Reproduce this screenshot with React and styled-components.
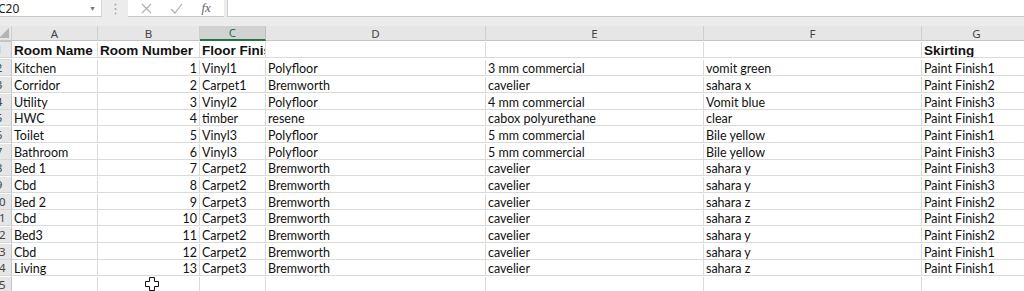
import React from 'react'
import styled, { createGlobalStyle } from 'styled-components'

const GlobalStyle = createGlobalStyle`
  html, body {
    margin: 0;
    padding: 0;
    background: #ffffff;
    overflow: hidden;
  }
`

const COLS = '25px 86px 102px 66px 220px 218px 218px 110px'

const Page = styled.div`
  width: 1024px;
  height: 291px;
  overflow: hidden;
  background: #ffffff;
`

const FormulaBar = styled.div`
  display: flex;
  align-items: stretch;
  height: 26px;
  background: #ececec;
  box-sizing: border-box;
  padding-bottom: 9px;
`

const NameBox = styled.div`
  width: 104px;
  margin-left: -2px;
  background: #ffffff;
  border-bottom: 1px solid #c9c9c9;
  border-right: 1px solid #d6d6d6;
  display: flex;
  align-items: center;
  justify-content: space-between;
  padding-right: 5px;
  box-sizing: border-box;
  font-family: 'Noto Sans', sans-serif;
  font-size: 12px;
  color: #222;
`

const Caret = styled.span`
  font-size: 7px;
  color: #777;
`

const Grip = styled.div`
  width: 26px;
  display: flex;
  justify-content: center;
  align-items: center;
  svg { display: block; }
`

const FnBox = styled.div`
  width: 96px;
  background: #ffffff;
  border-bottom: 1px solid #c9c9c9;
  display: flex;
  align-items: center;
  justify-content: space-around;
  padding: 0 4px 0 4px;
  box-sizing: border-box;
  color: #b5b5b5;
  svg { display: block; }
`

const Fx = styled.span`
  font-family: 'Liberation Serif', serif;
  font-style: italic;
  font-size: 13px;
  color: #666;
`

const FormulaInput = styled.div`
  flex: 1;
  margin-left: 3px;
  background: #ffffff;
  border-bottom: 1px solid #c9c9c9;
  border-left: 1px solid #d0d0d0;
`

const Sheet = styled.div`
  margin-left: -13px;
  display: flex;
  flex-direction: column;
`

const Row = styled.div`
  display: grid;
  grid-template-columns: ${COLS};
  height: ${p => p.$h}px;
`

const ColHead = styled.div`
  background: ${p => (p.$active ? '#d2d2d2' : '#e6e6e6')};
  color: ${p => (p.$active ? '#217346' : '#444')};
  border-right: 1px solid ${p => (p.$active ? '#bdbdbd' : '#cfcfcf')};
  border-bottom: ${p => (p.$active ? '2px solid #217346' : '1px solid #c4c4c4')};
  box-sizing: border-box;
  font-family: 'Noto Sans', sans-serif;
  font-size: 11.5px;
  display: flex;
  align-items: center;
  justify-content: center;
  position: relative;
  overflow: hidden;
`

const Corner = styled.div`
  position: absolute;
  right: 2px;
  bottom: 2px;
  width: 0;
  height: 0;
  border-left: 10px solid transparent;
  border-bottom: 10px solid #b4b4b4;
`

const RowHead = styled.div`
  background: #e6e6e6;
  border-right: 1px solid #c4c4c4;
  border-bottom: 1px solid #d6d6d6;
  box-sizing: border-box;
  font-family: 'Noto Sans', sans-serif;
  font-size: 11.5px;
  color: #444;
  display: flex;
  align-items: center;
  justify-content: center;
`

const Cell = styled.div`
  border-right: 1px solid #dadada;
  border-bottom: 1px solid #dadada;
  box-sizing: border-box;
  padding: 0 2px;
  white-space: nowrap;
  overflow: hidden;
  display: flex;
  align-items: center;
  justify-content: ${p => (p.$num ? 'flex-end' : 'flex-start')};
  font-family: ${p => (p.$bold ? "'Liberation Sans', Arial, sans-serif" : "'Lato', 'Open Sans', sans-serif")};
  font-weight: ${p => (p.$bold ? 700 : 400)};
  font-size: ${p => (p.$bold ? '13.5px' : '12.5px')};
  color: #111;
  padding-top: ${p => (p.$bold ? '2px' : '1px')};
`

const CursorMark = styled.div`
  position: absolute;
  left: 145px;
  top: 277px;
  svg { display: block; }
`

const letters = ['A', 'B', 'C', 'D', 'E', 'F', 'G']

const header = ['Room Name', 'Room Number', 'Floor Finish', '', '', '', 'Skirting']

const data = [
  ['Kitchen', 1, 'Vinyl1', 'Polyfloor', '3 mm commercial', 'vomit green', 'Paint Finish1'],
  ['Corridor', 2, 'Carpet1', 'Bremworth', 'cavelier', 'sahara x', 'Paint Finish2'],
  ['Utility', 3, 'Vinyl2', 'Polyfloor', '4 mm commercial', 'Vomit blue', 'Paint Finish3'],
  ['HWC', 4, 'timber', 'resene', 'cabox polyurethane', 'clear', 'Paint Finish1'],
  ['Toilet', 5, 'Vinyl3', 'Polyfloor', '5 mm commercial', 'Bile yellow', 'Paint Finish1'],
  ['Bathroom', 6, 'Vinyl3', 'Polyfloor', '5 mm commercial', 'Bile yellow', 'Paint Finish3'],
  ['Bed 1', 7, 'Carpet2', 'Bremworth', 'cavelier', 'sahara y', 'Paint Finish3'],
  ['Cbd', 8, 'Carpet2', 'Bremworth', 'cavelier', 'sahara y', 'Paint Finish3'],
  ['Bed 2', 9, 'Carpet3', 'Bremworth', 'cavelier', 'sahara z', 'Paint Finish2'],
  ['Cbd', 10, 'Carpet3', 'Bremworth', 'cavelier', 'sahara z', 'Paint Finish2'],
  ['Bed3', 11, 'Carpet2', 'Bremworth', 'cavelier', 'sahara y', 'Paint Finish2'],
  ['Cbd', 12, 'Carpet2', 'Bremworth', 'cavelier', 'sahara y', 'Paint Finish1'],
  ['Living', 13, 'Carpet3', 'Bremworth', 'cavelier', 'sahara z', 'Paint Finish1'],
  ['', '', '', '', '', '', ''],
]

// row heights alternate to average ~16.7px like the scaled screenshot
const rowHeight = i => (i % 3 === 2 ? 16 : 17)

function App() {
  return (
    <Page>
      <GlobalStyle />
      <FormulaBar>
        <NameBox>
          <span>C20</span>
          <Caret>▼</Caret>
        </NameBox>
        <Grip>
          <svg width="3" height="12" viewBox="0 0 3 12">
            <circle cx="1.5" cy="1.5" r="1" fill="#a8a8a8" />
            <circle cx="1.5" cy="6" r="1" fill="#a8a8a8" />
            <circle cx="1.5" cy="10.5" r="1" fill="#a8a8a8" />
          </svg>
        </Grip>
        <FnBox>
          <svg width="11" height="11" viewBox="0 0 11 11">
            <path d="M1 1 L10 10 M10 1 L1 10" stroke="#b0b0b0" strokeWidth="1.2" fill="none" />
          </svg>
          <svg width="13" height="11" viewBox="0 0 13 11">
            <path d="M1 6 L5 10 L12 1" stroke="#b0b0b0" strokeWidth="1.2" fill="none" />
          </svg>
          <Fx>fx</Fx>
        </FnBox>
        <FormulaInput />
      </FormulaBar>

      <Sheet>
        <Row $h={16}>
          <ColHead>
            <Corner />
          </ColHead>
          {letters.map(l => (
            <ColHead key={l} $active={l === 'C'}>
              {l}
            </ColHead>
          ))}
          <ColHead />
        </Row>
        <Row $h={18}>
          <RowHead>1</RowHead>
          {header.map((h, i) => (
            <Cell key={i} $bold>
              {h}
            </Cell>
          ))}
          <Cell />
        </Row>
        {data.map((r, i) => (
          <Row key={i} $h={rowHeight(i)}>
            <RowHead>{i + 2}</RowHead>
            {r.map((v, j) => (
              <Cell key={j} $num={j === 1}>
                {v}
              </Cell>
            ))}
            <Cell />
          </Row>
        ))}
      </Sheet>

      <CursorMark>
        <svg width="14" height="14" viewBox="0 0 14 14">
          <path
            d="M4.5 0.5 H9.5 V4.5 H13.5 V9.5 H9.5 V13.5 H4.5 V9.5 H0.5 V4.5 H4.5 Z"
            fill="#ffffff"
            stroke="#111"
            strokeWidth="1"
          />
        </svg>
      </CursorMark>
    </Page>
  )
}

export default App
